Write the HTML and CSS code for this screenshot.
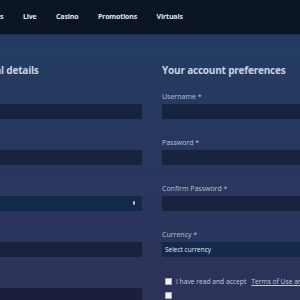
FILE: index.html
```html
<!DOCTYPE html>
<html lang="en">
<head>
    <meta charset="UTF-8">
    <title>Register</title>
    <link rel="stylesheet" href="styles.css">
</head>
<body>
    <nav class="topnav">
        <a href="#">Sports</a>
        <a href="#">Live</a>
        <a href="#">Casino</a>
        <a href="#">Promotions</a>
        <a href="#">Virtuals</a>
    </nav>

    <main class="register">
        <section class="column">
            <h2>Personal details</h2>
            <div class="field"><label>Title *</label><input type="text"></div>
            <div class="field"><label>Name *</label><input type="text"></div>
            <div class="field"><label>Gender</label><div class="select">&nbsp;<span class="arrows"></span></div></div>
            <div class="field"><label>Email *</label><input type="text"></div>
            <div class="field"><label>Phone *</label><input type="text"></div>
        </section>

        <section class="column">
            <h2>Your account preferences</h2>
            <div class="field"><label>Username *</label><input type="text"></div>
            <div class="field"><label>Password *</label><input type="password"></div>
            <div class="field"><label>Confirm Password *</label><input type="password"></div>
            <div class="field"><label>Currency *</label><div class="select">Select currency</div></div>
            <div class="check">
                <span class="box"></span>
                <span>I have read and accept</span>
                <a href="#">Terms of Use and Privacy Policy</a>
            </div>
            <div class="check"><span class="box"></span></div>
        </section>
    </main>
</body>
</html>
```

FILE: styles.css
```css
body {
    margin: 0;
    font-family: "Open Sans", "DejaVu Sans", sans-serif;
    background: linear-gradient(#223d64, #2e3159);
    min-height: 300px;
    overflow: hidden;
}
.topnav {
    height: 35px;
    background-color: #0b1422;
    display: flex;
    align-items: center;
    gap: 19.5px;
    margin-left: -18px;
    padding-bottom: 2px;
    border-bottom: 1px solid #1b3357;
    box-sizing: border-box;
}
.topnav a {
    color: #e2e7ef;
    font-size: 7px;
    font-weight: bold;
    text-decoration: none;
    letter-spacing: -0.15px;
}
.register {
    display: grid;
    grid-template-columns: 180px 180px;
    gap: 20px;
    margin-left: -38px;
    padding-top: 27px;
}
h2 {
    margin: 0 0 13px;
    font-size: 10px;
    line-height: 16px;
    letter-spacing: -0.2px;
    color: #c9d3e2;
}
.field {
    margin-bottom: 18px;
}
.field label {
    display: block;
    font-size: 7px;
    line-height: 12px;
    margin-bottom: 1px;
    color: #b7c1d2;
}
.field input, .select {
    display: block;
    width: 100%;
    height: 15px;
    box-sizing: border-box;
    border: none;
    background-color: rgba(5, 10, 25, 0.45);
    margin: 0;
}
.select {
    position: relative;
    background-color: #13294b;
    color: #e3e8f0;
    font-size: 6.5px;
    line-height: 15px;
    padding-left: 3px;
}
.arrows {
    position: absolute;
    right: 7px;
    top: 5px;
    width: 2px;
    height: 4px;
    background: #b8c0cc;
    border-radius: 1px;
}
.check {
    display: flex;
    align-items: center;
    gap: 4px;
    font-size: 6.7px;
    color: #c5ccd9;
    margin: 2px 0 0 3px;
    white-space: nowrap;
    height: 12px;
}
.check .box {
    width: 5px;
    height: 5px;
    background: #f2f4f7;
    border: 1px solid #aab;
    flex: none;
}
.check a {
    color: #c5ccd9;
    margin-left: 1px;
}
```
